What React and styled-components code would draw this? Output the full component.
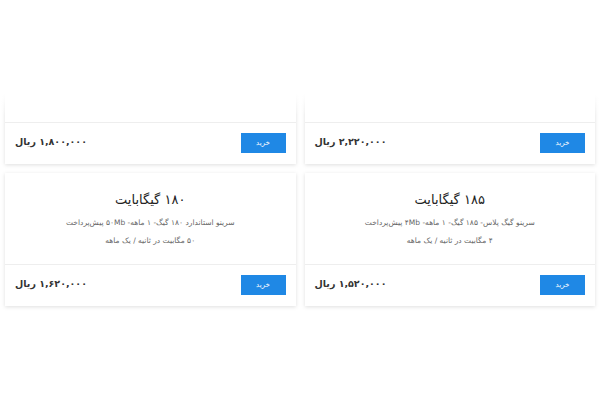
import React from "react";
import styled, { createGlobalStyle } from "styled-components";

const Global = createGlobalStyle`
  html, body { margin: 0; padding: 0; background: #ffffff; }
  body { font-family: "DejaVu Sans", "Noto Sans", sans-serif; }
`;

const Page = styled.div`
  position: relative;
  width: 600px;
  height: 400px;
  overflow: hidden;
`;

const Fade = styled.div`
  position: absolute;
  left: 0;
  right: 0;
  top: 0;
  height: 116px;
  background: linear-gradient(to bottom, #fff 0px, #fff 94px, rgba(255, 255, 255, 0) 116px);
  pointer-events: none;
`;

const Grid = styled.div`
  direction: rtl;
  display: grid;
  grid-template-columns: 1fr 1fr;
  column-gap: 9px;
  row-gap: 9px;
  padding: 80px 5px 0;
  box-sizing: border-box;
`;

const Card = styled.div`
  background: #fff;
  box-shadow: 0 1px 4px rgba(0, 0, 0, 0.13);
  display: flex;
  flex-direction: column;
`;

const Body = styled.div`
  height: ${(p) => p.$h}px;
  box-sizing: border-box;
  padding-top: 18px;
  display: flex;
  flex-direction: column;
  align-items: center;
  text-align: center;
`;

const Title = styled.div`
  font-size: 13px;
  font-weight: normal;
  color: #222;
  line-height: 18px;
  margin-bottom: 5px;
`;

const Desc = styled.div`
  font-size: 7.5px;
  color: #666;
  line-height: 18px;
`;

const Footer = styled.div`
  height: 41px;
  border-top: 1px solid #eeeeee;
  display: flex;
  align-items: center;
  justify-content: space-between;
  padding: 0 10px;
`;

const BuyButton = styled.button`
  width: 45px;
  height: 20px;
  border: none;
  background: #1f88e5;
  color: #fff;
  font-family: inherit;
  font-size: 7px;
  padding: 0;
  margin-top: -2px;
`;

const Price = styled.div`
  font-size: 9.5px;
  font-weight: bold;
  color: #333;
  margin-top: -5px;
`;

const plans = [
  { price: "۲,۲۲۰,۰۰۰ ریال", h: 42 },
  { price: "۱,۸۰۰,۰۰۰ ریال", h: 42 },
  {
    title: "۱۸۵ گیگابایت",
    lines: ["سرینو گیگ پلاس- ۱۸۵ گیگ- ۱ ماهه- ۴Mb پیش‌پرداخت", "۴ مگابیت در ثانیه / یک ماهه"],
    price: "۱,۵۲۰,۰۰۰ ریال",
    h: 91,
  },
  {
    title: "۱۸۰ گیگابایت",
    lines: ["سرینو استاندارد ۱۸۰ گیگ- ۱ ماهه- ۵۰Mb پیش‌پرداخت", "۵۰ مگابیت در ثانیه / یک ماهه"],
    price: "۱,۶۲۰,۰۰۰ ریال",
    h: 91,
  },
];

export default function App() {
  return (
    <>
      <Global />
      <Page>
        <Grid>
          {plans.map((p, i) => (
            <Card key={i}>
              <Body $h={p.h}>
                {p.title && <Title>{p.title}</Title>}
                {p.lines && p.lines.map((l, j) => <Desc key={j}>{l}</Desc>)}
              </Body>
              <Footer>
                <BuyButton>خرید</BuyButton>
                <Price>{p.price}</Price>
              </Footer>
            </Card>
          ))}
        </Grid>
        <Fade />
      </Page>
    </>
  );
}
